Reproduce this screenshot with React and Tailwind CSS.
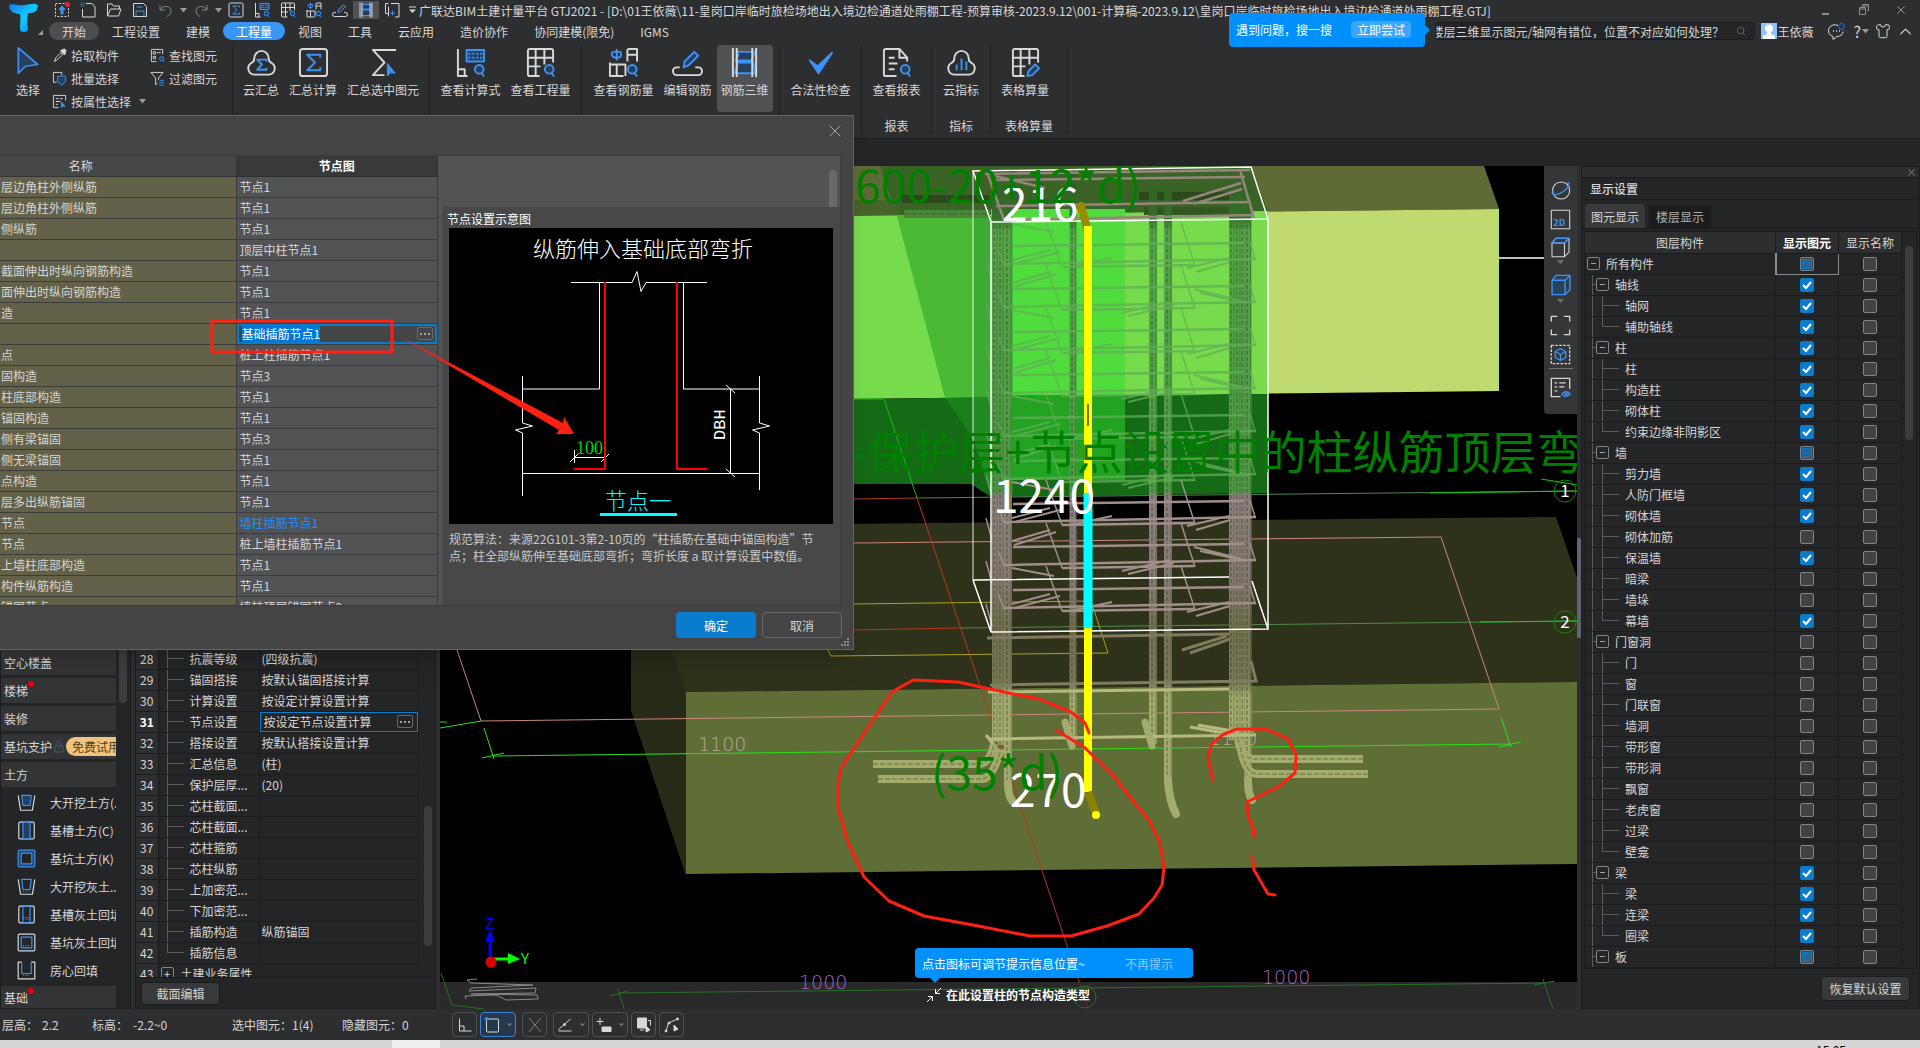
import { ChevronDown, ChevronUp, MessageCircle, Search, Shirt, X } from 'lucide-react'

const G = '#d8d8d8'
const B = '#3b93f5'

function Svg({ size = 32, children, className = '' }) {
  return (
    <svg width={size} height={size} viewBox="0 0 32 32" fill="none" stroke={G} strokeWidth="2" strokeLinejoin="round" className={className} aria-hidden="true">
      {children}
    </svg>
  )
}

const Lens = () => (
  <g stroke={B} fill="#26405e">
    <circle cx="25" cy="23" r="4.500" />
    <path d="M27.500 27l2.500 3.500" />
  </g>
)
const Grid = () => <path d="M15 30H5a2 2 0 0 1-2-2V4a2 2 0 0 1 2-2h22a2 2 0 0 1 2 2v12M3 11h26M3 20h13M11 2v28M20 2v16" />
const Cloud = () => <path d="M8.500 12a7.500 8 0 0 1 15 0c0 2 1 3.500 3 4.500a6.500 6.500 0 0 1-2.500 12H8a6.500 6.500 0 0 1-2.500-12c2-1 3-2.500 3-4.500z" />
const DotTri = () => <path d="M12 3h18v12H12z" fill="#26405e" stroke={B} />

const icons = {
  cloudSum: <><Cloud /><path d="M21 15v-2H11.500l5 5-5 5.500H21v-2" stroke={B} /></>,
  sum: <><rect x="2" y="2" width="28" height="28" rx="3" /><path d="M23 11V8H9.500l8 8-8 8H23v-3" stroke={B} /></>,
  sumPick: <><path d="M29 3H5l12 13L5 29h12" /><path d="M20 17v13l3-3.500 5 .5z" fill={B} stroke={B} strokeWidth="1" /></>,
  formula: <><path d="M3 2v28h10M3 23h7v7" /><DotTri /><path d="M14 7h14M14 11h14" stroke={B} strokeDasharray="2 2" /><Lens /></>,
  grid: <><Grid /><Lens /></>,
  steel: <><path d="M18 30V18H2v12h14M9 18v12M20 15V4a2 2 0 0 1 2-2h8v13M20 8h10M2 16v4" /><path d="M9 2v12M4 5c0 4 0 6 5 6s5-2 4-6M5 5h8" stroke={B} /><Lens /></>,
  edit: <><path d="M8 21H5a4 4 0 0 0 0 8h22a4 4 0 0 0 0-8h-3" /><path d="M12 21l1-6 10-10 4 4-10 10z" stroke={B} fill="#26405e" /></>,
  rebar: <><path d="M7 5h20l-4 9H7l3-7M7 16h18l2 11H6l3-9" stroke={B} fill="#26405e" /><path d="M4 1v30M8 1v30M24 1v30M28 1v30" /></>,
  check: <path d="M5 14l8 6L28 6 14 27z" fill={B} stroke={B} />,
  report: <><path d="M16 30H5a2 2 0 0 1-2-2V4a2 2 0 0 1 2-2h14l8 9v4M19 2v9h8M8 11h6M8 17h9M8 23h6" /><Lens /></>,
  index: <><Cloud /><path d="M11 24v-6M16 24V12M21 24v-9" stroke={B} /></>,
  gridEdit: <><Grid /><path d="M18 30l1-5 7-7 4 4-7 7z" stroke={B} fill="#26405e" /></>,
  upload: <><path d="M3 3h26v26H3z" strokeDasharray="4 3" /><path d="M16 8l6 7h-4v9h-4v-9h-4z" fill={B} stroke={B} /><circle cx="27" cy="5" r="5" fill="#e0252b" stroke="none" /></>,
  newFile: <><path d="M12 3h12l6 7v20H5V14" /><path d="M2 2h6v6H2z" stroke={B} strokeDasharray="2 2" /></>,
  open: <path d="M3 28V4h9l3 4h12v6M3 28l6-14h21l-5 14z" />,
  save: <><path d="M3 3h20l6 6v20H3z" /><path d="M9 10h12M8 29V18h16v11" stroke={B} /></>,
  undo: <path d="M4 6v10h10M5 15C10 6 26 7 26 18c0 6-4 9-8 11" stroke="#858585" />,
  redo: <path d="M28 6v10H18M27 15C22 6 6 7 6 18c0 6 4 9 8 11" stroke="#858585" />,
  frame: <><path d="M9 3H3v20h6M14 3h16v18M22 30h8V20M9 9v20" /><path d="M12 22h10M17 17v10" stroke={B} /></>,
  cursor: <path d="M5 1v29l8-8 14-2z" fill="#26405e" stroke={B} />,
  picker: <><path d="M5 29l3-8L19 10l4 4-12 11z" /><path d="M18 6l9 9 3-10-4-3z" fill={G} /></>,
  batch: <><path d="M10 24H3V3h18v6" /><path d="M12 11h17v12l-8 7-9-7z" stroke={B} fill="#26405e" /></>,
  byAttr: <><path d="M14 29H3V3h26v11M8 10h6M8 16h10M8 22h5M17 10h6" /><path d="M20 17v12l3-3h5z" stroke={B} fill={B} /></>,
  find: <><path d="M14 29H3V3h24v10M7 8h5v5H7zM7 18h5v5H7zM15 10h8" /><Lens /></>,
  filter: <><path d="M2 3h26L18 15v4M12 15v14l4-3M2 3l10 12" /><path d="M20 20h10M20 25h10M20 30h10" stroke={B} /></>,
}

const Caret = ({ className = '' }) => (
  <svg width="7" height="5" viewBox="0 0 7 5" className={className} aria-hidden="true"><path d="M0 0h7L3.500 4.500z" fill="#9a9a9a" /></svg>
)

const quick = [
  ['upload', '升级'], ['newFile', '新建'], ['open', '打开'], ['save', '保存'], ['undo', '撤销'],
]
const quick2 = [
  ['sum', '汇总'], ['formula', '计算式'], ['grid', '工程量'], ['steel', '钢筋量'], ['edit', '编辑'], ['rebar', '三维'], ['frame', '截图'],
]
const tabs = ['开始', '工程设置', '建模', '工程量', '视图', '工具', '云应用', '造价协作', '协同建模(限免)', 'IGMS']

function QuickButton({ id, label }) {
  return (
    <button aria-label={label} className={`flex h-[18px] w-[26px] shrink-0 items-center justify-center ${id === 'rebar' ? 'bg-[#505153]' : ''}`}>
      <Svg size={16}>{icons[id]}</Svg>
    </button>
  )
}

function Header() {
  return (
    <header className="relative flex h-[42px] shrink-0">
      <div className="flex w-[49px] shrink-0 items-start">
        <svg width="48" height="40" viewBox="0 0 48 40" aria-hidden="true">
          <defs>
            <linearGradient id="logo" x1="0" y1="0" x2="1" y2="1">
              <stop offset="0" stopColor="#0a7cf5" /><stop offset=".5" stopColor="#12c8ff" /><stop offset="1" stopColor="#0a84f7" />
            </linearGradient>
          </defs>
          <path d="M9 6c2-3 6-1 9-1 7 1 12-2 18-1 3 1 2 4 0 7-2 2-5 2-8 2-1 5-1 10 0 16 0 4-8 4-8 0 0-6 1-11 0-15-5 0-10-2-11-8z" fill="url(#logo)" />
          <path d="M43 30v5h-5z" fill="#a0a0a0" />
        </svg>
      </div>
      <div className="min-w-0 flex-1">
        <div className="flex h-5 items-center">
          {quick.map(([id, label]) => <QuickButton key={id} id={id} label={label} />)}
          <Caret className="mx-px shrink-0" />
          <QuickButton id="redo" label="重做" />
          <Caret className="mx-px shrink-0" />
          {quick2.map(([id, label]) => <QuickButton key={id} id={id} label={label} />)}
          <svg width="14" height="8" viewBox="0 0 14 8" className="shrink-0" aria-hidden="true"><path d="M4 1h7" stroke={G} /><path d="M4 3.500h7L7.500 7z" fill={G} /></svg>
          <h1 className="truncate text-[#d8d8d8]">广联达BIM土建计量平台 GTJ2021 - [D:\01王依薇\11-皇岗口岸临时旅检场地出入境边检通道处雨棚工程-预算审核-2023.9.12\001-计算稿-2023.9.12\皇岗口岸临时旅检场地出入境边检通道处雨棚工程.GTJ]</h1>
          <div className="ml-auto flex items-center gap-[24px] pr-3 text-[#a0a0a0]">
            <button aria-label="最小化" className="h-3 w-3"><span className="mt-2 block h-[2px] w-[7px] bg-[#8c8c8c]" /></button>
            <button aria-label="还原">
              <svg width="12" height="12" viewBox="0 0 12 12" fill="none" stroke="#8c8c8c"><path d="M4.500 3V.5h6v6H9M4.500 2h6M1.500 3.500h6v7h-6zM1.500 5h6" /></svg>
            </button>
            <button aria-label="关闭"><X size={14} strokeWidth={1.500} /></button>
          </div>
        </div>
        <div className="flex h-[22px] items-center">
          <nav className="flex">
            {tabs.map(t => (
              <button key={t} className={`h-[18px] rounded-full px-[13px] ${t === '开始' ? 'bg-[#4d4e4f]' : t === '工程量' ? 'bg-[#3a96f7] text-white' : ''}`}>{t}</button>
            ))}
          </nav>
          <div className="ml-auto flex items-center pr-[5px]">
            <label className="flex h-[18px] w-[320px] items-center rounded-sm border border-[#1b1c1d] bg-[#242527] pr-2">
              <input aria-label="搜索" readOnly defaultValue="楼层三维显示图元/轴网有错位，位置不对应如何处理？" className="min-w-0 flex-1 bg-transparent -indent-[5px] outline-none" />
              <Search size={10} color="#6a6a6a" />
            </label>
            <svg width="16" height="16" viewBox="0 0 16 16" className="ml-[6px]" aria-hidden="true"><path fill="#8cc4ff" d="M0 0h16v16H0z" /><circle cx="8" cy="5.500" r="4" fill="#fff" /><path d="M6 8h4v3l4 2v3H2v-3l4-2z" fill="#fff" /></svg>
            <button className="w-[38px] text-left">王依薇</button>
            <button aria-label="消息" className="ml-[13px]">
              <svg width="17" height="17" viewBox="0 0 17 17" fill="none" stroke={G} aria-hidden="true">
                <path d="M10 2.500A6.500 6 0 1 0 5 13.500v3l4-3c4 0 6-2.500 6-5" /><path d="M5 8h1M8 8h1M11 8h1" strokeWidth="1.500" /><circle cx="13.500" cy="3.500" r="3" stroke="#2f6fb5" fill="#1d3a5c" />
              </svg>
            </button>
            <button aria-label="帮助" className="ml-2 flex items-center gap-px text-base leading-4">?<Caret /></button>
            <button aria-label="皮肤" className="ml-[6px]"><Shirt size={16} strokeWidth={1.500} /></button>
            <button aria-label="收起" className="ml-[5px]"><ChevronUp size={19} strokeWidth={1.500} /></button>
          </div>
        </div>
      </div>
      <div className="absolute right-[495px] top-[13px] z-20 flex h-[34px] w-[196px] items-start rounded bg-[#0091ff] px-[7px] pt-2 text-white">
        <span>遇到问题，搜一搜</span>
        <button className="ml-auto mr-[7px] h-[17px] rounded-sm bg-[#3ba6ff] px-[6px]">立即尝试</button>
        <svg width="6" height="12" viewBox="0 0 6 12" className="absolute -right-[5px] top-[11px]" aria-hidden="true"><path d="M0 0l6 6-6 6z" fill="#0091ff" /></svg>
      </div>
    </header>
  )
}

function Big({ id, label, className, active }) {
  return (
    <button className={`flex shrink-0 flex-col items-center whitespace-nowrap rounded-sm pt-[2px] ${id === 'cursor' ? 'gap-[6px]' : 'gap-[3px]'} ${className} ${active ? 'bg-[#505153]' : ''}`}>
      <Svg size={id === 'cursor' ? 28 : 31}>{icons[id]}</Svg>
      <span>{label}</span>
    </button>
  )
}

function Small({ id, label }) {
  return (
    <button className="flex h-[23px] items-center gap-1 whitespace-nowrap">
      <Svg size={15}>{icons[id]}</Svg>{label}
    </button>
  )
}

function Group({ title, className, children }) {
  return (
    <section className={`flex shrink-0 flex-col items-center border-r border-[#1e1f20] ${className}`}>
      <div className="flex h-[67px] justify-center">{children}</div>
      {title && <p className="mt-[9px]">{title}</p>}
    </section>
  )
}

function Ribbon() {
  return (
    <div className="flex h-[97px] shrink-0 border-b border-[#1b1c1d] pb-1 pt-[3px]">
      <section className="flex w-[233px] shrink-0 items-start border-r border-[#1e1f20] pl-1">
        <Big id="cursor" label="选择" className="w-[48px]" />
        <div className="-mt-px flex flex-col items-start">
          <Small id="picker" label="拾取构件" />
          <Small id="batch" label="批量选择" />
          <div className="flex items-center gap-2"><Small id="byAttr" label="按属性选择" /><Caret /></div>
        </div>
        <div className="-mt-px ml-1">
          <Small id="find" label="查找图元" />
          <Small id="filter" label="过滤图元" />
        </div>
      </section>
      <Group className="w-[197px]">
        <Big id="cloudSum" label="云汇总" className="w-[46px]" />
        <Big id="sum" label="汇总计算" className="w-[58px]" />
        <Big id="sumPick" label="汇总选中图元" className="w-[82px]" />
      </Group>
      <Group className="w-[152px]">
        <Big id="formula" label="查看计算式" className="w-[70px]" />
        <Big id="grid" label="查看工程量" className="w-[70px]" />
      </Group>
      <Group className="w-[198px]">
        <Big id="steel" label="查看钢筋量" className="w-[70px]" />
        <Big id="edit" label="编辑钢筋" className="w-[58px]" />
        <Big id="rebar" label="钢筋三维" className="w-[56px]" active />
      </Group>
      <Group className="w-[82px]"><Big id="check" label="合法性检查" className="w-[70px]" /></Group>
      <Group title="报表" className="w-[70px]"><Big id="report" label="查看报表" className="w-[58px]" /></Group>
      <Group title="指标" className="w-[59px]"><Big id="index" label="云指标" className="w-[46px]" /></Group>
      <Group title="表格算量" className="w-[77px]"><Big id="gridEdit" label="表格算量" className="mr-2 w-[58px]" /></Group>
    </div>
  )
}

const earth = [
  ['大开挖土方(.', 'trap', true], ['基槽土方(C)', 'slot', true], ['基坑土方(K)', 'pit', true],
  ['大开挖灰土..', 'trap', false], ['基槽灰土回填', 'slot', false], ['基坑灰土回填', 'pit', false], ['房心回填', 'room', false],
]

function EarthIcon({ kind, solid }) {
  const fill = solid ? '#26405e' : 'none'
  const hatch = !solid && <path d="M10 21h12M10 24h12" stroke={B} strokeDasharray="2 2" />
  return (
    <Svg size={19}>
      {kind === 'trap' && <><path d="M2 4l4 25h20l4-25" /><path d="M8 4l2 17h12l2-17z" stroke={B} fill={fill} /></>}
      {kind === 'slot' && <><rect x="3" y="2" width="26" height="28" rx="2" /><path d="M10 2h12v28H10z" stroke={B} fill={fill} /></>}
      {kind === 'pit' && <><rect x="2" y="2" width="28" height="28" rx="2" stroke={solid ? B : G} fill={fill} /><path d="M7 7h18v18H7z" stroke={B} fill={solid ? '#242527' : 'none'} /></>}
      {kind === 'room' && <><path d="M8 2H2v28h28V2h-6" /><path d="M8 2v19h16V2" stroke={B} /></>}
      {hatch}
    </Svg>
  )
}

function NavHead({ children, dot }) {
  return (
    <button className="mb-[3px] flex h-[25px] w-full shrink-0 items-center overflow-hidden whitespace-nowrap bg-[#333436] pl-[3px] text-left">
      <span className="relative">{children}{dot && <i className="absolute -right-[6px] -top-px h-[6px] w-[6px] rounded-full bg-red-600" />}</span>
    </button>
  )
}

function SideNav() {
  return (
    <nav className="flex w-[131px] shrink-0 border border-[#1b1c1d] bg-[#242527]">
      <div className="flex w-[115px] flex-col justify-end overflow-hidden">
        <NavHead>空心楼盖</NavHead>
        <NavHead dot>楼梯</NavHead>
        <NavHead>装修</NavHead>
        <button className="mb-[3px] flex h-[25px] shrink-0 items-center whitespace-nowrap bg-[#333436] pl-[3px]">
          基坑支护
          <svg width="10" height="12" viewBox="0 0 10 12" fill="none" stroke="#4c5870" className="mx-[2px] shrink-0" aria-hidden="true"><path d="M1 5h8v6H1zM3 5V2.500a2 2 0 0 1 4 0V5M5 7v2" /></svg>
          <span className="rounded-l-full bg-[#eec57c] py-px pl-[6px] text-[#5a3c14]">免费试用</span>
        </button>
        <NavHead>土方</NavHead>
        <div className="mb-[2px] mt-[-2px]">
          {earth.map(([label, kind, solid]) => (
            <button key={label} className="flex h-7 items-center gap-[14px] whitespace-nowrap pl-4">
              <span className="shrink-0"><EarthIcon kind={kind} solid={solid} /></span>{label}
            </button>
          ))}
        </div>
        <button className="flex h-[22px] shrink-0 items-center bg-[#333436] pl-[3px]">
          <span className="relative">基础<i className="absolute -right-[6px] -top-px h-[6px] w-[6px] rounded-full bg-red-600" /></span>
        </button>
      </div>
      <div className="relative flex-1"><span className="absolute left-[3px] top-[400px] h-[136px] w-2 rounded-full bg-[#3c3d3f]" /></div>
    </nav>
  )
}

const props = [
  [28, '抗震等级', '(四级抗震)'], [29, '锚固搭接', '按默认锚固搭接计算'], [30, '计算设置', '按设定计算设置计算'],
  [31, '节点设置', '按设定节点设置计算'], [32, '搭接设置', '按默认搭接设置计算'], [33, '汇总信息', '(柱)'],
  [34, '保护层厚...', '(20)'], [35, '芯柱截面...', ''], [36, '芯柱截面...', ''], [37, '芯柱箍筋', ''], [38, '芯柱纵筋', ''],
  [39, '上加密范...', ''], [40, '下加密范...', ''], [41, '插筋构造', '纵筋锚固'], [42, '插筋信息', ''],
]

function More({ label }) {
  return (
    <button aria-label={label} className="flex h-[13px] w-4 items-center justify-center gap-[2px] rounded-[2px] border border-[#68696b]">
      <i className="h-[2px] w-[2px] bg-[#a0a0a0]" /><i className="h-[2px] w-[2px] bg-[#a0a0a0]" /><i className="h-[2px] w-[2px] bg-[#a0a0a0]" />
    </button>
  )
}

function Properties() {
  return (
    <section className="ml-1 flex w-[301px] shrink-0 flex-col border border-[#1b1c1d] bg-[#242527]">
      <div className="flex min-h-0 flex-1 border-b border-[#1b1c1d]">
        <div className="flex w-[283px] flex-col justify-end overflow-hidden">
          <table className="-mb-[7px] w-full table-fixed border-collapse">
            <tbody>
              {props.map(([n, name, value]) => (
                <tr key={n} className="h-[21px]">
                  <td className={`w-[22px] border-b border-r border-[#1b1c1d] bg-[#2d2e30] p-0 text-center ${n === 31 ? 'font-bold text-white' : ''}`}>{n}</td>
                  <td className="w-[101px] border-b border-r border-[#1b1c1d] p-0">
                    <div className="flex h-5 items-center">
                      <span className={`ml-2 w-px self-start bg-[#5a5b5d] ${n === 42 ? 'h-[10px]' : 'h-5'}`} />
                      <span className="mr-[6px] h-px w-4 bg-[#5a5b5d]" />{name}
                    </div>
                  </td>
                  <td className="border-b border-r border-[#1b1c1d] p-0">
                    {n === 31
                      ? <div className="flex h-5 items-center border border-[#0a7ccc] pr-1"><input aria-label={name} defaultValue={value} className="h-4 min-w-0 flex-1 bg-transparent pl-[3px] outline-none" /><More label="更多节点设置" /></div>
                      : <span className="pl-[2px]">{value}</span>}
                  </td>
                </tr>
              ))}
              <tr className="h-[21px]">
                <td className="border-r border-[#1b1c1d] bg-[#2d2e30] p-0 text-center">43</td>
                <td colSpan={2} className="p-0">
                  <div className="flex items-center gap-[7px] pl-[2px]"><button aria-label="展开" className="h-[13px] w-[13px] rounded-[2px] border border-[#858585] text-center leading-[9px]">+</button>土建业务属性</div>
                </td>
              </tr>
            </tbody>
          </table>
        </div>
        <div className="relative flex-1"><span className="absolute bottom-[31px] right-[3px] h-[140px] w-2 rounded-full bg-[#3c3d3f]" /></div>
      </div>
      <div className="h-[30px] shrink-0 px-[5px] pt-1">
        <button className="h-[23px] w-[79px] rounded border border-[#1b1c1d] bg-[#38393b]">截面编辑</button>
      </div>
    </section>
  )
}

// vertical bars: [x, bottom y, width]
const bars = [[995, 742, 6], [1001, 745, 6], [1008, 785, 8], [1073, 744, 7], [1153, 744, 8], [1168, 785, 8], [1232, 740, 6], [1238, 742, 6], [1243, 748, 5], [1248, 790, 7]]

function Hoops() {
  const rows = []
  for (let i = 0; i < 9; i++) {
    const y = 43 * i
    rows.push(
      <g key={i} stroke={i < 6 ? '#62ae57' : '#a08e88'} strokeWidth="2.500" opacity={i < 6 ? 0.75 : 1}>
        <path d={`M1013 ${246 + y}L1244 ${243 + y}M1003 ${264 + y}L1256 ${259 + y}M1062 ${267 + y}L1194 ${265 + y}`} />
        <path d={`M998 ${250 + y}l6 14M1250 ${242 + y}l5 17M1046 ${222 + y}l16 45M1181 ${222 + y}l14 44M986 ${260 + y}l6 22`} strokeWidth="1.500" />
        {i % 2
          ? <path d={`M1012 ${240 + y}l38-11M1014 ${244 + y}l42-13M1122 ${270 + y}l48-11M1128 ${273 + y}l46-11M1200 ${250 + y}l42 9M1194 ${246 + y}l48 12`} strokeWidth="2" />
          : <path d={`M1012 ${260 + y}l38-10M1014 ${264 + y}l46-12M1187 ${268 + y}l42-10M1196 ${272 + y}l34-10M1012 ${224 + y}l42 8M1070 ${267 + y}l42-9`} strokeWidth="2" />}
      </g>
    )
  }
  return rows
}

function Flat({ d, c = '#a4ab6e' }) {
  return (
    <g>
      <path d={d} stroke={c} strokeWidth="8" />
      <path d={d} stroke="#3d4a14" strokeOpacity=".3" strokeWidth="2" strokeDasharray="5 2" />
    </g>
  )
}

function Scene() {
  return (
    <svg viewBox="440 166 1137 843" preserveAspectRatio="xMinYMin slice" className="absolute inset-0 h-full w-full" fill="none" fontFamily="'Noto Sans CJK SC', sans-serif" aria-hidden="true">
      <defs>
        <linearGradient id="steel" gradientUnits="userSpaceOnUse" x1="0" y1="166" x2="0" y2="820">
          <stop offset="0" stopColor="#2f5a20" /><stop offset=".08" stopColor="#35702a" /><stop offset=".1" stopColor="#55a548" /><stop offset=".495" stopColor="#4f9a44" />
          <stop offset=".505" stopColor="#8c807c" /><stop offset=".64" stopColor="#857a72" /><stop offset=".7" stopColor="#74714f" /><stop offset=".79" stopColor="#7b7a58" /><stop offset=".81" stopColor="#a4ab6e" /><stop offset="1" stopColor="#a4ab6e" />
        </linearGradient>
      </defs>
      <path d="M440 166h1137v843H440z" fill="#000" />

      {/* upper beam */}
      <path d="M853 166h631l15 43-646 7z" fill="#5f6b36" />
      <path d="M853 216l646-7v182l-646 7z" fill="#bfdb70" />
      <path d="M880 166h371l17 45-371 5z" fill="#3a6426" />
      <path d="M853 200l44 0v16h-44z" fill="#47642a" />
      <path d="M853 216l415-5v183l-415 5z" fill="#77dc4c" />
      <path d="M853 399l415-5v99l-277 4-20-13-118 0z" fill="#156a15" />
      <path d="M897 216h94v181l-46 1z" fill="#4aba35" />
      <path d="M945 398l46-1v98l-20-60z" fill="#178019" />
      <path d="M991 209h134v186H991z" fill="#4fdc3c" />
      <path d="M991 395h134v85H991z" fill="#22a322" />
      <path d="M973 216h40v280h-22l-18-60z" fill="#2c9a30" fillOpacity=".45" />

      {/* foundation */}
      <path d="M631 526l925-9 21 61v104l-891 10v183l-55-165z" fill="#2f321b" />
      <path d="M631 650h41l14 42v183l-55-166z" fill="#272a17" />
      <path d="M686 692l891-10v182l-891 10z" fill="#5f6e37" />

      {/* axes and dimension lines */}
      <path d="M457 650l24 71L1499 709 1441 537 854 543" stroke="#c9867a" />
      <path d="M440 722h7M440 728l41-7M484 728l10 31M482 758l22-5M493 756L1510 744M1501 717l10 30M1499 747l22-5" stroke="#2be01c" />
      <path d="M853 399h30M884 399l33 99" stroke="#22b822" />
      <path d="M854 499l63-1 171 510M854 630l107-2" stroke="#b8381c" />
      <path d="M917 498l660-7M961 628l616-7" stroke="#4f8a4a" />
      <path d="M1430 493l147-2M1480 622l97-1M1541 479l36 6" stroke="#0bd40b" />
      <path d="M854 604l237-3 17 52-277 3-3-6" stroke="#a8a41a" />
      <path d="M1499 258h45" stroke="#fff" strokeWidth="1.500" />
      <g stroke="#0b8a0b"><circle cx="1565" cy="491" r="11" /><circle cx="1565" cy="622" r="11" /></g>
      <g fill="#fff" fontSize="17" textAnchor="middle"><text x="1565" y="497">1</text><text x="1565" y="628">2</text></g>
      <g fontSize="19" fontFamily="'DejaVu Sans', sans-serif" fontWeight="200" fill="#b9a996">
        <text x="698" y="751">1100</text><text x="1209" y="745">1100</text>
      </g>

      {/* column reinforcement */}
      <Flat d="M902 199h88" c="#2b4a1c" /><Flat d="M904 214h86" c="#48873a" />
      <Flat d="M1139 196h111" c="#2b4a1c" /><Flat d="M1144 211h102" c="#2f5a20" />
      {bars.map(([x, y, w]) => (
        <g key={x}>
          <path d={`M${x}.01 ${x === 1073 ? 170 : 190}L${x} ${y}`} stroke="url(#steel)" strokeWidth={w} />
          <path d={`M${x - 1} 225V${y}`} stroke="#20301a" strokeOpacity=".28" strokeWidth="2" strokeDasharray="4 2" />
          <path d={`M${x + w / 2 - 1} 225V${y}`} stroke="#20301a" strokeOpacity=".3" strokeWidth="1" />
        </g>
      ))}
      <Hoops />
      <g stroke="#95857c" strokeWidth="2.500">
        <path d="M985 174l265-4M993 180l252-3M996 206l255-4M1003 220l250-5M987 172l17 48M1240 170l14 48M1183 201l58-18M1194 204l48-15M995 176l50 12" />
      </g>
      <path d="M987 638l242-4M1182 650l45-14M1190 653l40-14" stroke="#7f7a5c" strokeWidth="3" />
      <path d="M990 685l266-4-5-20" stroke="#807c60" strokeWidth="3" />
      <path d="M988 692l241-3M988 739l268-4M986 735l8 10M1190 727l40 7M1198 725l40 7" stroke="#b5ba80" strokeWidth="3" />
      <Flat d="M873 764h105q12 0 16-20" /><Flat d="M878 779h105q10-2 18-30" />
      <Flat d="M1363 759H1252q-12-4-14-20" /><Flat d="M1368 774h-110q-14 0-18-30" />
      <g stroke="#a4ab6e" strokeWidth="8" strokeLinecap="round">
        <path d="M1008 784q0 12 5 18M1168 780q1 20 8 34M1248 780q0 14 4 20" />
        <path d="M1065 722l7 24M1145 722l7 24" strokeWidth="7" />
      </g>

      <g stroke="#fff" strokeWidth="1.500">
        <path d="M973 171l278-4 17 52-277 3zM991 222v410M1268 219v410M991 632l277-3-16-48M973 580l18 52M973 580l256-3" />
        <path d="M973 171v409" strokeOpacity=".6" />
      </g>

      <path d="M1081 206l6 22" stroke="#9a8a00" strokeWidth="8" strokeLinecap="round" />
      <path d="M1088 226v267" stroke="#ff0" strokeWidth="8" />
      <path d="M1088 493v135" stroke="#0ff" strokeWidth="9" />
      <path d="M1088 628v164" stroke="#ff0" strokeWidth="8" />
      <path d="M1088 404v22" stroke="#77701c" strokeWidth="2" />
      <path d="M1088 792l8 21" stroke="#8a8200" strokeWidth="8" />
      <circle cx="1096" cy="815" r="4" fill="#ff0" />

      <g fontSize="46" fill="#fff">
        <text x="1002" y="221">216</text><text x="993" y="513">1240</text><text x="1010" y="807">270</text>
      </g>
      <g fontSize="46" fill="#008000">
        <text x="855" y="203">600-20+12*d)</text>
        <text x="851" y="469">-保护层+节点设置中的柱纵筋顶层弯</text>
        <text x="931" y="790">(35*d)</text>
      </g>

      {/* ground strip */}
      <path d="M440 982h1137v27H440z" fill="#292929" />
      <g stroke="#267326">
        <path d="M441 973l11 32 32 4M610 996l18-5M618 989l6 20M619 993L1544 983M1543 979l10 30M1534 985l21-4" />
        <circle cx="1085" cy="997" r="11" />
      </g>
      <path d="M1078 978l10 30" stroke="#8a2020" />
      <g fontSize="19" fontFamily="'DejaVu Sans', sans-serif" fontWeight="200" fill="#a860c8">
        <text x="799" y="989">1000</text><text x="1262" y="984">1000</text>
      </g>
      <path d="M477 979l-10 1 4 3 62 2-62 3-2 3 67-3-1 5-64 1 66 1 1 4-32 1-10-5-31 1 1 3" stroke="#8a8a8a" />

      <path d="M490 960v-24" stroke="#00f" strokeWidth="3" /><path d="M485 942l5-12 5 12z" fill="#00f" />
      <path d="M494 959h15" stroke="#0f0" strokeWidth="3" /><path d="M508 953l12 6-12 5z" fill="#0f0" />
      <circle cx="491" cy="962" r="5.500" fill="#e00000" />
      <text x="485" y="929" fontSize="15" fill="#00f">Z</text><text x="521" y="964" fontSize="15" fill="#0f0">Y</text>
    </svg>
  )
}

const cube = 'M3 9h19v21H3zM3 9l6-7h20l-7 7M29 2v21l-7 7'

function ViewTools() {
  return (
    <div className="absolute right-0 top-0 flex w-[33px] flex-col items-center rounded-bl bg-[#353638] pb-[14px] pt-[10px] text-[#d8d8d8]">
      <button aria-label="动态观察" className="h-[29px]"><Svg size={21}><circle cx="17" cy="16" r="13" strokeWidth="1.600" /><path d="M26 5c6-3 3 6-5 12S1 25 4 17" stroke={B} /></Svg></button>
      <button aria-label="二维" className="h-[29px]"><Svg size={21}><path d="M2 2h28v28H2z" strokeWidth="1.600" /><text x="5" y="26" fill={B} stroke="none" fontSize="14" fontWeight="700">2D</text></Svg></button>
      <button aria-label="视图方向" className="h-[26px]"><Svg size={21}><path d={cube} strokeWidth="1.600" /><path d="M3 9l6-7h20l-7 7z" stroke={B} /></Svg></button>
      <Caret className="mb-[5px] opacity-50" />
      <button aria-label="着色" className="h-[29px]"><Svg size={22}><path d={cube} stroke={B} fill="#26405e" /></Svg></button>
      <Caret className="mb-[7px] opacity-50" />
      <button aria-label="全屏" className="h-[29px]"><Svg size={21}><path d="M2 10V2h9M21 2h9v8M30 22v8h-9M11 30H2v-8" /></Svg></button>
      <button aria-label="局部三维" className="h-[28px]"><Svg size={21}><path d="M2 2h28v28H2z" strokeDasharray="4 2" /><path d="M16 7l8 4.500v9L16 25l-8-4.500v-9zM8 11.500l8 4.500 8-4.500M16 16v9" stroke={B} /></Svg></button>
      <span className="mb-[6px] h-px w-6 bg-[#707173]" />
      <button aria-label="显示设置" className="h-[25px]"><Svg size={21}><path d="M16 30H2V2h28v16M7 9h4M14 9h10M7 15h4M14 15h8M7 21h4" /><path d="M18 26q6-7 13 0-7 7-13 0z" stroke={B} /><circle cx="24.500" cy="26" r="1.500" stroke={B} /></Svg></button>
    </div>
  )
}

function Viewport() {
  return (
    <main className="relative ml-1 min-w-0 flex-1 overflow-hidden bg-black">
      <Scene />
      <ViewTools />
      <div className="absolute bottom-[31px] left-[475px] flex h-[30px] w-[278px] items-center rounded bg-[#0091ff] pl-[7px] pr-5 text-white">
        <span>点击图标可调节提示信息位置~</span>
        <button className="ml-auto text-[#8ccbff]">不再提示</button>
        <svg width="12" height="6" viewBox="0 0 12 6" className="absolute -bottom-[5px] left-[14px]" aria-hidden="true"><path d="M0 0h12L6 6z" fill="#0091ff" /></svg>
      </div>
      <p className="absolute bottom-[6px] left-[486px] flex items-center gap-1 font-bold text-white">
        <svg width="16" height="16" viewBox="0 0 16 16" fill="none" stroke="#fff" aria-hidden="true"><path d="M15 1L9.500 6.500M9.500 2v4.500H14M1 15l5.500-5.500M2 9.500h4.500V14" /></svg>
        在此设置柱的节点构造类型
      </p>
    </main>
  )
}

// [label, level, display element, last child]
const layers = [
  ['所有构件', 0, 'part'], ['轴线', 1, 'on'], ['轴网', 2, 'on'], ['辅助轴线', 2, 'on', true],
  ['柱', 1, 'on'], ['柱', 2, 'on'], ['构造柱', 2, 'on'], ['砌体柱', 2, 'on'], ['约束边缘非阴影区', 2, 'on', true],
  ['墙', 1, 'part'], ['剪力墙', 2, 'on'], ['人防门框墙', 2, 'on'], ['砌体墙', 2, 'on'], ['砌体加筋', 2, ''], ['保温墙', 2, 'on'], ['暗梁', 2, ''], ['墙垛', 2, ''], ['幕墙', 2, 'on', true],
  ['门窗洞', 1, ''], ['门', 2, ''], ['窗', 2, ''], ['门联窗', 2, ''], ['墙洞', 2, ''], ['带形窗', 2, ''], ['带形洞', 2, ''], ['飘窗', 2, ''], ['老虎窗', 2, ''], ['过梁', 2, ''], ['壁龛', 2, '', true],
  ['梁', 1, 'on'], ['梁', 2, 'on'], ['连梁', 2, 'on'], ['圈梁', 2, 'on', true], ['板', 1, 'part'],
]

function Check({ state, label }) {
  return (
    <label className="relative mx-auto block h-[14px] w-[14px]">
      <input type="checkbox" aria-label={label} defaultChecked={state === 'on'} className="peer block h-[14px] w-[14px] appearance-none rounded-[2px] border border-[#858585] bg-[#414244] checked:border-[#0a7ccc] checked:bg-[#0a7ccc]" />
      {state === 'part' && <i className="absolute left-[2px] top-[2px] h-[10px] w-[10px] border border-[#0a7ccc] bg-[#2a6390]" />}
      <svg viewBox="0 0 14 14" fill="none" stroke="#fff" strokeWidth="2" className="absolute inset-0 hidden peer-checked:block"><path d="M3 7l3 3 5-6" /></svg>
    </label>
  )
}

const Fold = () => <button aria-label="折叠" className="relative flex h-[13px] w-[13px] items-center justify-center rounded-[2px] border border-[#858585] bg-[#242527]"><i className="h-px w-[5px] bg-[#a0a0a0]" /></button>

function LayerCell({ label, level, last }) {
  return (
    <div className="flex h-5 items-center whitespace-nowrap">
      {level > 0 && <span className="ml-[7px] h-5 w-px shrink-0 bg-[#5a5b5d]" />}
      {level === 0 && <span className="ml-[2px] mr-[6px]"><Fold /></span>}
      {level === 1 && <><span className="h-px w-[3px] bg-[#5a5b5d]" /><span className="mr-[6px]"><Fold /></span></>}
      {level === 2 && <><span className={`ml-[9px] w-px self-start bg-[#5a5b5d] ${last ? 'h-[10px]' : 'h-5'}`} /><span className="mr-[6px] h-px w-4 bg-[#5a5b5d]" /></>}
      {label}
    </div>
  )
}

function DisplayPanel() {
  return (
    <aside className="flex w-[339px] shrink-0 flex-col border border-[#1b1c1d] bg-[#242527]">
      <div className="flex h-[11px] items-center justify-end border-b border-[#1b1c1d] bg-[#2d2e30] pr-[2px]"><button aria-label="关闭面板"><X size={11} color="#8c8c8c" /></button></div>
      <h2 className="flex h-[22px] items-center border-b border-[#1b1c1d] pl-2 font-medium">显示设置</h2>
      <div className="flex h-[29px] items-end gap-1 border-b border-[#1b1c1d] pl-[3px]">
        <button className="h-6 w-[60px] rounded-t bg-[#38393b]">图元显示</button>
        <button className="h-[23px] w-[62px] rounded-t bg-[#1b1c1d] text-[#b0b0b0]">楼层显示</button>
      </div>
      <div className="mx-[2px] mt-[2px] flex min-h-0 flex-1 overflow-hidden border border-[#1b1c1d]">
        <table className="w-[317px] table-fixed border-collapse self-start">
          <thead>
            <tr className="h-[21px] bg-[#2d2e30]">
              <th className="border-b border-r border-[#1b1c1d] p-0 font-normal">图层构件</th>
              <th className="w-[63px] border-b border-r border-[#1b1c1d] p-0 font-bold text-white">显示图元</th>
              <th className="w-[63px] border-b border-r border-[#1b1c1d] p-0 font-normal">显示名称</th>
            </tr>
          </thead>
          <tbody>
            {layers.map(([label, level, state, last], i) => (
              <tr key={i} className="h-[21px]">
                <td className="border-b border-r border-[#1b1c1d] p-0"><LayerCell label={label} level={level} last={last} /></td>
                <td className={`border-b border-r p-0 ${i === 0 ? 'border-2 border-t-0 border-[#8c8c8c]' : 'border-[#1b1c1d]'}`}><Check state={state} label={`显示图元 ${label}`} /></td>
                <td className="border-b border-r border-[#1b1c1d] p-0"><Check state="" label={`显示名称 ${label}`} /></td>
              </tr>
            ))}
          </tbody>
        </table>
        <div className="flex-1 pl-[3px] pt-[14px]"><span className="block h-[194px] w-2 rounded-full bg-[#3c3d3f]" /></div>
      </div>
      <div className="flex h-[39px] items-start justify-end pr-[9px] pt-[7px]">
        <button className="h-[25px] w-[89px] rounded border border-[#1b1c1d] bg-[#38393b]">恢复默认设置</button>
      </div>
    </aside>
  )
}

const nodes = [
  ['层边角柱外侧纵筋', '节点1'], ['层边角柱外侧纵筋', '节点1'], ['侧纵筋', '节点1'], ['', '顶层中柱节点1'],
  ['截面伸出时纵向钢筋构造', '节点1'], ['面伸出时纵向钢筋构造', '节点1'], ['造', '节点1'], ['', '基础插筋节点1'],
  ['点', '桩上柱插筋节点1'], ['固构造', '节点3'], ['柱底部构造', '节点1'], ['锚固构造', '节点1'], ['侧有梁锚固', '节点3'],
  ['侧无梁锚固', '节点1'], ['点构造', '节点1'], ['层多出纵筋锚固', '节点1'], ['节点', '墙柱插筋节点1'], ['节点', '桩上墙柱插筋节点1'],
  ['上墙柱底部构造', '节点1'], ['构件纵筋构造', '节点1'], ['锚固节点', '墙柱顶层锚固节点2'],
]

function NodeDiagram() {
  return (
    <svg viewBox="449 228 384 296" className="block w-[384px] bg-black" fill="none" stroke="#fff" fontFamily="'Noto Sans CJK SC', sans-serif" role="img" aria-label="纵筋伸入基础底部弯折">
      <g stroke="none" fill="#fff">
        <text x="643" y="257" fontSize="22" fontWeight="300" textAnchor="middle">纵筋伸入基础底部弯折</text>
        <text transform="translate(725 440) rotate(-90)" fontSize="17" fontFamily="'Liberation Mono', monospace">DBH</text>
        <text x="576" y="454" fontSize="18" fill="#00d800" fontFamily="'Liberation Serif', serif">100</text>
        <text x="638" y="509" fontSize="22" fontWeight="300" fill="#0ff" textAnchor="middle">节点一</text>
      </g>
      <path d="M571 282.500h61l5-11 4 20 5-9h61M599.500 282v107H522.500M683.500 282v107h76M522.500 376v47l10 3-17 4 7 3v63M759.500 376v47l10 3-17 4 7 3v57M522.500 473.500h237" />
      <path d="M730.500 389v84M726 385l9 8M726 469l9 8M574 457.500h31M574.500 450v13M570 462l8-8M601 462l8-8" />
      <path d="M605 282v187h-31M677 282v187h30" stroke="#f00" strokeWidth="2" />
      <path d="M600 514.500h77" stroke="#0ff" strokeWidth="3" />
    </svg>
  )
}

function NodeDialog() {
  return (
    <div role="dialog" aria-label="节点设置" className="absolute left-0 top-[115px] z-10 flex w-[854px] flex-col border border-l-0 border-[#636465] bg-[#434443] shadow-xl">
      <div className="flex h-[39px] items-start justify-end pr-2 pt-[5px]">
        <button aria-label="关闭对话框"><X size={20} strokeWidth={1.200} color="#a8a8a8" /></button>
      </div>
      <div className="mr-[12px] flex h-[451px] overflow-hidden border-y border-r border-[#3a3b3d] bg-[#525355]">
        <table className="w-[438px] table-fixed border-collapse self-start">
          <thead>
            <tr className="h-5 bg-[#464749]">
              <th className="w-[236px] border-b border-r border-[#343537] py-0 pl-0 pr-[74px] font-normal">名称</th>
              <th className="border-b border-r border-[#2e2f31] bg-[#38393b] p-0 font-bold text-white">节点图</th>
            </tr>
          </thead>
          <tbody>
            {nodes.map(([name, node], i) => (
              <tr key={i} className="h-[21px]">
                <td className="border-b border-r border-[#3a3b3d] bg-[#636248] pb-px pl-px pr-0 pt-0">{name}</td>
                <td className="border-b border-r border-[#3a3b3d] p-0">
                  {i === 7
                    ? (
                      <div className="flex h-5 items-center justify-between border-2 border-[#0a7ccc] bg-[#444547] pl-[3px] pr-[2px]">
                        <input aria-label="节点图" defaultValue={node} className="h-4 bg-[#0078d7] text-white outline-none [field-sizing:content]" />
                        <More label="选择节点图" />
                      </div>
                    )
                    : <span className={`block pb-px pl-[3px] ${i === 16 ? 'text-[#1e90ff]' : ''}`}>{node}</span>}
                </td>
              </tr>
            ))}
          </tbody>
        </table>
        <div className="relative ml-1 flex-1 pt-[51px]">
          <span className="absolute right-[3px] top-[14px] h-[300px] w-2 rounded-full bg-[#68696b]" />
          <div className="relative h-full bg-[#474847] px-[7px] pt-[3px]">
            <h3 className="-ml-[2px] h-[18px] leading-[18px] text-white">节点设置示意图</h3>
            <NodeDiagram />
            <p className="mt-[6px] leading-[17px] text-[#c8c8c8]">规范算法：来源22G101-3第2-10页的“柱插筋在基础中锚固构造”节点；柱全部纵筋伸至基础底部弯折；弯折长度 a 取计算设置中数值。</p>
          </div>
        </div>
      </div>
      <div className="flex h-[43px] items-start justify-end gap-[6px] pr-[11px] pt-[6px]">
        <button className="h-[26px] w-[80px] rounded-sm bg-[#0a7ccc] text-white">确定</button>
        <button className="h-[26px] w-[80px] rounded-sm border border-[#68696b] bg-[#444547]">取消</button>
      </div>
      <svg width="9" height="9" viewBox="0 0 9 9" fill="#8a8b8d" className="absolute bottom-[2px] right-[3px]" aria-hidden="true"><path d="M6 0h2v2H6zM3 3h2v2H3zM6 3h2v2H6zM0 6h2v2H0zM3 6h2v2H3zM6 6h2v2H6z" /></svg>
    </div>
  )
}

const modes = [
  ['正交', <path d="M5 3v25h24M5 18h9v10" key="a" />],
  ['矩形', <><path d="M7 4h20q2 0 2 2v22q0 2-2 2H7q-2 0-2-2V8" /><circle cx="5" cy="4" r="3" fill={B} stroke={B} /></>, true],
  ['交点', <path d="M4 2l24 28M28 2L4 30" stroke="#808080" key="c" />],
  ['角度', <><path d="M3 25L27 4" /><path d="M3 28h26" stroke="#808080" strokeWidth="4" /><circle cx="15" cy="15" r="2" fill={G} /></>, true],
  ['偏移', <><path d="M8 2v14M1 9h14" /><path d="M12 20h18v9H12z" fill={G} /></>, true],
  ['复制', <><path d="M3 2h18v20H3z" fill={G} /><path d="M24 7h5v10M8 26h8" /><path d="M20 18v12l8-4z" fill={G} /></>],
  ['折线', <><path d="M4 28L9 12 27 4" /><circle cx="4" cy="28" r="2" fill={G} /><circle cx="10" cy="12" r="2" fill={G} /><circle cx="27" cy="4" r="2" fill={G} /><path d="M20 16v12l8-4z" fill={G} /></>],
]

function StatusBar() {
  return (
    <footer className="flex h-[31px] shrink-0 items-center pl-[2px]">
      <p className="flex w-[90px] gap-1"><span>层高：</span><span>2.2</span></p>
      <p className="flex w-[140px] gap-[5px]"><span>标高：</span><span>-2.2~0</span></p>
      <p className="flex w-[110px]"><span className="w-[60px]">选中图元：</span><span>1(4)</span></p>
      <p className="flex w-[110px]"><span className="w-[60px]">隐藏图元：</span><span>0</span></p>
      <div className="flex gap-[3px]">
        {modes.map(([label, icon, drop], i) => (
          <button key={label} aria-label={label} className={`flex h-[25px] items-center justify-center gap-[6px] rounded-sm border ${drop ? 'w-9' : 'w-[25px]'} ${i === 1 ? 'border-[#3b82d6] bg-[#26384e]' : 'border-[#505153]'} ${i === 2 || i === 3 ? 'ml-[3px]' : ''}`}>
            <Svg size={16}>{icon}</Svg>{drop && <ChevronDown size={7} strokeWidth={4} color="#808080" />}
          </button>
        ))}
      </div>
    </footer>
  )
}

// red pen marks over the whole window
function Markup() {
  return (
    <svg className="pointer-events-none absolute inset-0 z-30 h-full w-full" fill="none" stroke="#ff2012" strokeWidth="3" strokeLinejoin="round" strokeLinecap="round" aria-hidden="true">
      <rect x="212" y="321" width="180" height="31" rx="1" />
      <path d="M400 336.500L563 423l1-6 10 17h-18l3-4z" fill="#ff2012" stroke="none" />
      <path d="M1089 733l-4-10-14-11-32-13-35-7-46-10-45-2-21 12-26 38-25 38-3 15v24l9 33 17 37 25 24 35 15 49 9 57 11h41l36-10 32-12 15-16 8-13 2-18-4-24-11-23-17-20-19-25-28-27-29-18" />
      <path d="M1213 781l-5-24 3-12 11-10 15-6h29l22 10 8 16-1 18-17 14-31 15 1 15 5 10 1 10M1252 857l2 13 14 24 7 1" />
    </svg>
  )
}

export default function App() {
  return (
    <div className="relative flex h-screen flex-col overflow-hidden bg-[#2d2e30] font-['Noto_Sans_CJK_SC',sans-serif] text-[12px] leading-[17px] text-[#d6d6d6]">
      <Header />
      <Ribbon />
      <div className="h-[27px] shrink-0 bg-[#242527]" />
      <div className="flex min-h-0 flex-1">
        <SideNav />
        <Properties />
        <Viewport />
        <div className="flex w-1 shrink-0 items-center"><span className="h-[100px] w-full bg-[#5c6570]" /></div>
        <DisplayPanel />
      </div>
      <StatusBar />
      <div className="flex h-2 shrink-0 items-start overflow-hidden bg-[#d6d6d6] text-black">
        <span className="ml-[392px] h-2 w-12 bg-[#efefef]" />
        <time className="ml-auto mr-[74px] mt-px">15:05</time>
      </div>
      <NodeDialog />
      <Markup />
    </div>
  )
}
